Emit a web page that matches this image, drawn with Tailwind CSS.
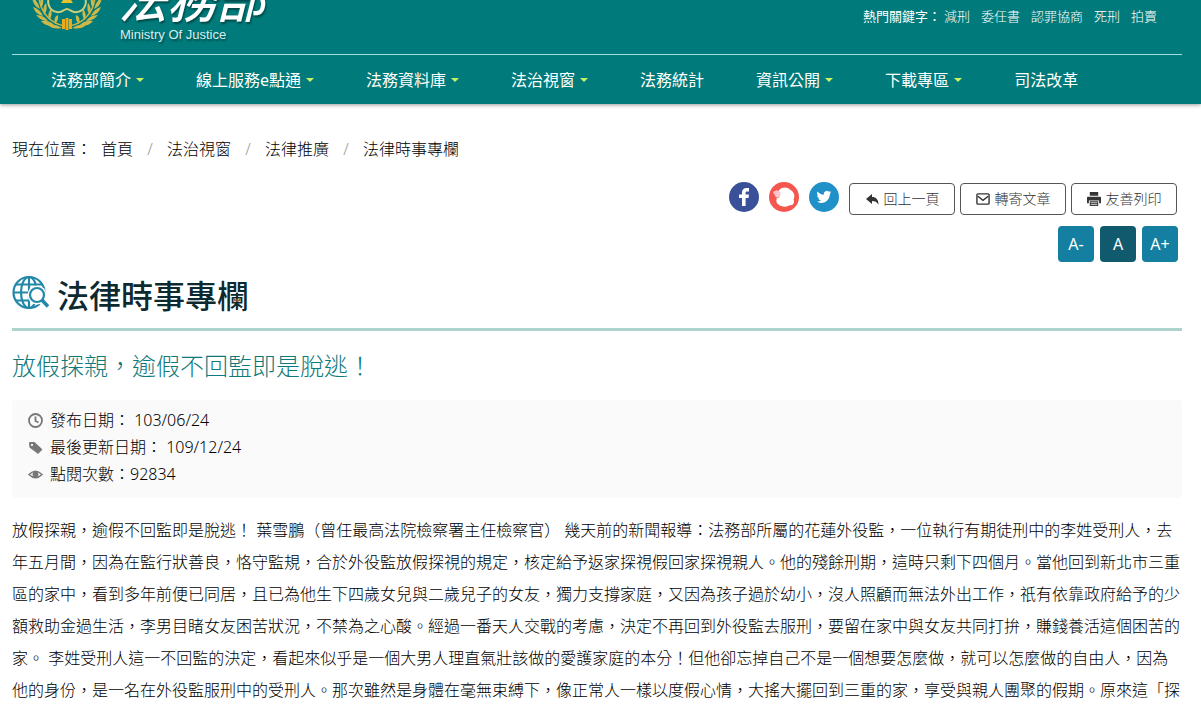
<!DOCTYPE html>
<html lang="zh-Hant">
<head>
    <meta charset="UTF-8">
    <meta name="viewport" content="width=device-width, initial-scale=1.0">
    <title>法務部-法律時事專欄</title>
    <script src="https://cdn.jsdelivr.net/npm/@tailwindcss/browser@4"></script>
</head>
<body class="bg-white text-black text-base font-light font-['Noto_Sans','Noto_Sans_CJK_TC',sans-serif]">
    <header class="bg-[#007a7a] text-white pl-3 pr-[19px] shadow-[0_1px_4px_rgba(0,0,0,0.4)]">
        <div class="h-[54px] flex items-end justify-between overflow-hidden">
            <a href="#" class="flex items-end pl-5 pb-2.5">
                <!-- emblem -->
                <svg class="w-[70px] h-[72px] mb-3.5" viewBox="0 0 70 72" fill="none">
                    <g id="wreath">
                        <path d="M33 68C20 66 9 56 7 40" stroke="#c9b545" stroke-width="1.500"/>
                        <g fill="#cfb84a">
                            <path d="M8 51Q1 48 0 39Q6 43 8 51Z"/>
                            <path d="M11 58Q4 57 1 49Q8 51 11 58Z"/>
                            <path d="M16 63Q9 63 4 57Q12 57 16 63Z"/>
                            <path d="M22 67Q14 69 9 63Q17 62 22 67Z"/>
                            <path d="M30 70Q21 72 16 67Q23 65 30 70Z"/>
                            <path d="M9 50Q13 45 10 38Q7 43 9 50Z"/>
                            <path d="M12 57Q16 52 14 45Q10 49 12 57Z"/>
                            <path d="M17 62Q21 58 19 51Q15 55 17 62Z"/>
                            <path d="M23 66Q27 62 26 57Q21 59 23 66Z"/>
                        </g>
                    </g>
                    <use href="#wreath" transform="matrix(-1 0 0 1 70 0)"/>
                    <path d="M30 61h3v10h-3zM33.500 60h3v12h-3zM37 61h3v10h-3z" fill="#e9a91c"/>
                    <path d="M18 38C14 44 17 53 25 54C30 55 32 51 35 51C38 51 40 55 45 54C53 53 56 44 52 38" stroke="#c9cf7a" stroke-width="2"/>
                    <path d="M35 36L41 45H29Z" fill="#e5c22e"/>
                </svg>
                <span class="flex flex-col pl-4 [text-shadow:1px_2px_2px_rgba(0,0,0,0.4)]">
                    <span class="text-[49px] leading-[54px] font-medium italic">法務部</span>
                    <span class="text-[13px] leading-[18px] font-normal text-[#d8eeee] pl-0.5 font-['Liberation_Sans',sans-serif]">Ministry Of Justice</span>
                </span>
            </a>
            <div class="h-[54px] flex gap-[11px] pr-[25px] pt-1.5 text-[13px] leading-[20px]">
                <span class="-mr-2 font-normal">熱門關鍵字：</span>
                <a href="#">減刑</a>
                <a href="#">委任書</a>
                <a href="#">認罪協商</a>
                <a href="#">死刑</a>
                <a href="#">拍賣</a>
            </div>
        </div>
        <nav class="border-t border-[#9fe0dc] h-[50px] flex items-center gap-[52px] pl-[39px] font-normal whitespace-nowrap">
            <a href="#" class="flex items-center gap-[5px]">法務部簡介<span class="border-x-4 border-x-transparent border-t-4 border-t-[#c8f560]"></span></a>
            <a href="#" class="flex items-center gap-[5px]">線上服務e點通<span class="border-x-4 border-x-transparent border-t-4 border-t-[#c8f560]"></span></a>
            <a href="#" class="flex items-center gap-[5px]">法務資料庫<span class="border-x-4 border-x-transparent border-t-4 border-t-[#c8f560]"></span></a>
            <a href="#" class="flex items-center gap-[5px]">法治視窗<span class="border-x-4 border-x-transparent border-t-4 border-t-[#c8f560]"></span></a>
            <a href="#">法務統計</a>
            <a href="#" class="flex items-center gap-[5px]">資訊公開<span class="border-x-4 border-x-transparent border-t-4 border-t-[#c8f560]"></span></a>
            <a href="#" class="flex items-center gap-[5px]">下載專區<span class="border-x-4 border-x-transparent border-t-4 border-t-[#c8f560]"></span></a>
            <a href="#">司法改革</a>
        </nav>
    </header>

    <main class="pl-3 pr-[19px] pt-[33px]">
        <nav class="flex leading-6">
            <span class="mr-[9px]">現在位置：</span>
            <a href="#">首頁</a>
            <span class="w-[34px] text-center text-[#999]">/</span>
            <a href="#">法治視窗</a>
            <span class="w-[34px] text-center text-[#999]">/</span>
            <a href="#">法律推廣</a>
            <span class="w-[34px] text-center text-[#999]">/</span>
            <a href="#">法律時事專欄</a>
        </nav>

        <!-- share / print -->
        <div class="flex justify-end items-start mt-[21px] pr-[5px] gap-[5px] text-sm text-[#333]">
            <div class="flex gap-2.5 mr-[5px]">
                <a href="#" aria-label="Facebook">
                    <svg class="size-[30px]" viewBox="0 0 30 30"><circle cx="15" cy="15" r="15" fill="#3a5199"/><path d="M13 24V16h-3v-3.500h3V10.500C13 7.500 14.800 6 17.300 6H20v3.500h-1.800C17 9.500 16.600 10 16.600 11v1.500H20L19.500 16h-2.900v8Z" fill="#fff"/></svg>
                </a>
                <a href="#" aria-label="Plurk">
                    <svg class="size-[30px]" viewBox="0 0 30 30"><circle cx="15" cy="15" r="15" fill="#f4574f"/><path d="M9.500 9C12 4.500 19 4.500 21.500 8C25 10 26.500 14 24.500 17.500C26 20.500 24 24 21 23C18 25.500 12 25 9.500 22.500C7 21 7 18 8 16L11 15Z" fill="#fff"/><path d="M4 10L8 8L11.500 10.500L11 15L7 15.500Z" fill="#fbc4cc"/></svg>
                </a>
                <a href="#" aria-label="Twitter">
                    <svg class="size-[30px]" viewBox="0 0 30 30"><circle cx="15" cy="15" r="15" fill="#1f90c8"/><path transform="translate(7.500 7.500) scale(.62)" d="M23.950 4.570a10 10 0 0 1-2.820.770 4.950 4.950 0 0 0 2.160-2.720c-.950.550-2 .950-3.130 1.180a4.920 4.920 0 0 0-8.380 4.480C7.690 8.090 4.070 6.130 1.640 3.160a4.920 4.920 0 0 0 1.520 6.570 4.900 4.900 0 0 1-2.230-.610v.060c0 2.390 1.690 4.370 3.950 4.830a5 5 0 0 1-2.210.080 4.940 4.940 0 0 0 4.600 3.420A9.870 9.870 0 0 1 0 19.540a14 14 0 0 0 7.550 2.210c9.050 0 14-7.500 14-13.980v-.640a10 10 0 0 0 2.400-2.560Z" fill="#fff"/></svg>
                </a>
            </div>
            <button type="button" class="mt-px w-[106px] h-8 flex items-center justify-center gap-[5px] border border-[#555] rounded">
                <svg class="size-[14px]" viewBox="0 0 14 14" fill="#333"><path d="M1 7L7 2V5C11 5 13.500 7.500 13.500 12.500C12 10 10 9 7 9V12Z"/></svg>
                回上一頁
            </button>
            <button type="button" class="mt-px w-[106px] h-8 flex items-center justify-center gap-[5px] border border-[#555] rounded">
                <svg class="size-[14px]" viewBox="0 0 15 15" fill="none" stroke="#333" stroke-width="1.500"><rect x="1" y="2" width="13" height="11" rx="1"/><path d="M2 4.500L7.500 9L13 4.500"/></svg>
                轉寄文章
            </button>
            <button type="button" class="mt-px w-[106px] h-8 flex items-center justify-center gap-[5px] border border-[#555] rounded">
                <svg class="size-[14px]" viewBox="0 0 15 15"><path d="M3 0h9v4H3zM0 6q0-1 1-1h13q1 0 1 1v6h-2V9H2v3H0zM3 10h9v5H3z" fill="#333"/><path d="M4 11.500h7M4 13.500h7" stroke="#fff" stroke-width=".8"/></svg>
                友善列印
            </button>
        </div>

        <!-- font size -->
        <div class="flex justify-end gap-1.5 mt-[11px] pr-1 text-white text-base leading-6 font-normal">
            <button type="button" class="size-9 rounded bg-[#147fa0]">A-</button>
            <button type="button" class="size-9 rounded bg-[#115a6e]">A</button>
            <button type="button" class="size-9 rounded bg-[#147fa0]">A+</button>
        </div>

        <div class="flex mt-2.5 pb-2 gap-2 border-b-3 border-[#aed2cd]">
            <svg class="w-[37px] h-[37px] mt-[3px]" viewBox="0 0 37 37" fill="none" stroke="#2388a8" stroke-width="2.200">
                <circle cx="17" cy="17.500" r="15.500"/>
                <ellipse cx="17" cy="17.500" rx="8" ry="15.500"/>
                <path d="M17 2v31M1.500 17.500h31M4 9.500h26M4 25.500h26"/>
                <circle cx="25" cy="20" r="9.500" fill="#fff" stroke="none"/>
                <path d="M27 27L31 35H37V29Z" fill="#fff" stroke="none"/>
                <circle cx="25" cy="20" r="7"/>
                <path d="M30 25L36 31.500" stroke-width="3.500"/>
            </svg>
            <h2 class="text-[32px] leading-[48px] font-medium text-[#0c2a30]">法律時事專欄</h2>
        </div>

        <h3 class="text-2xl leading-9 mt-[17px] text-[#0f7a7c]">放假探親，逾假不回監即是脫逃！</h3>

        <ul class="mt-4 px-4 pt-[7px] pb-2.5 bg-[#fafafa] rounded leading-[27px]">
            <li class="flex items-center gap-[7px]">
                <svg class="size-[15px]" viewBox="0 0 15 15" fill="none" stroke="#777" stroke-width="1.800"><circle cx="7.500" cy="7.500" r="6.500"/><path d="M7.500 3.500V8L10.500 9.500"/></svg>
                發布日期： 103/06/24
            </li>
            <li class="flex items-center gap-[7px]">
                <svg class="size-[15px]" viewBox="0 0 15 15" fill="#777"><path fill-rule="evenodd" d="M1 3Q1 2 2 2H6.500L14 9Q14.500 9.500 14 10L10.500 13.500Q10 14 9.500 13.500L1.500 7.500ZM4 3.800A1.100 1.100 0 1 0 4 6A1.100 1.100 0 1 0 4 3.800Z"/></svg>
                最後更新日期： 109/12/24
            </li>
            <li class="flex items-center gap-[7px]">
                <svg class="size-[15px]" viewBox="0 0 15 15" fill="none" stroke="#777" stroke-width="1.500"><path d="M1 7.500Q7.500 1 14 7.500Q7.500 14 1 7.500Z"/><circle cx="7.500" cy="7.500" r="2.200" fill="#777"/></svg>
                點閱次數：92834
            </li>
        </ul>

        <p class="mt-4 leading-8">放假探親，逾假不回監即是脫逃！ 葉雪鵬（曾任最高法院檢察署主任檢察官） 幾天前的新聞報導：法務部所屬的花蓮外役監，一位執行有期徒刑中的李姓受刑人，去年五月間，因為在監行狀善良，恪守監規，合於外役監放假探視的規定，核定給予返家探視假回家探視親人。他的殘餘刑期，這時只剩下四個月。當他回到新北市三重區的家中，看到多年前便已同居，且已為他生下四歲女兒與二歲兒子的女友，獨力支撐家庭，又因為孩子過於幼小，沒人照顧而無法外出工作，祇有依靠政府給予的少額救助金過生活，李男目睹女友困苦狀況，不禁為之心酸。經過一番天人交戰的考慮，決定不再回到外役監去服刑，要留在家中與女友共同打拚，賺錢養活這個困苦的家。 李姓受刑人這一不回監的決定，看起來似乎是一個大男人理直氣壯該做的愛護家庭的本分！但他卻忘掉自己不是一個想要怎麼做，就可以怎麼做的自由人，因為他的身份，是一名在外役監服刑中的受刑人。那次雖然是身體在毫無束縛下，像正常人一樣以度假心情，大搖大擺回到三重的家，享受與親人團聚的假期。原來這「探</p>
    </main>
</body>
</html>
